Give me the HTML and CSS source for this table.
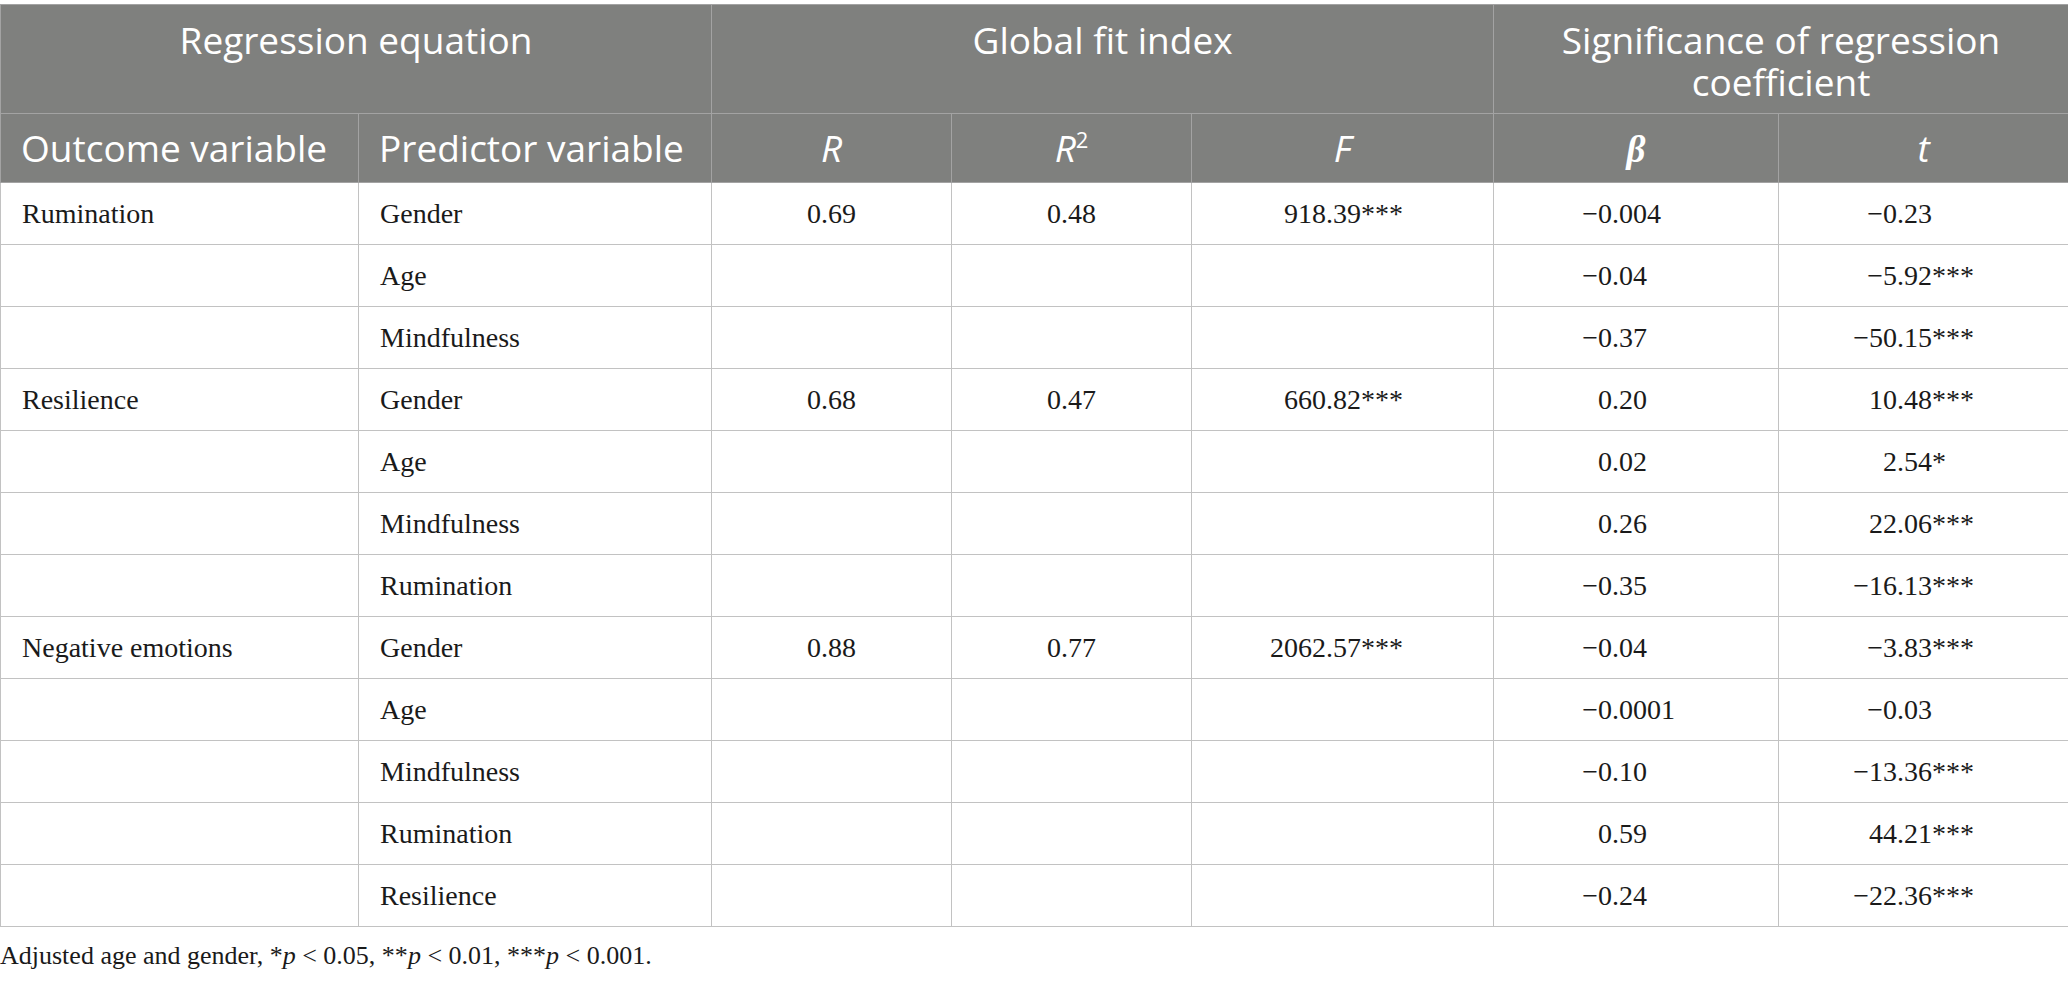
FILE: index.html
```html
<!DOCTYPE html>
<html lang="en">
<head>
<meta charset="utf-8">
<title>Regression table</title>
<link rel="stylesheet" href="styles.css">
</head>
<body>
<table class="tbl">
  <colgroup>
    <col class="c1"><col class="c2"><col class="c3"><col class="c4"><col class="c5"><col class="c6"><col class="c7">
  </colgroup>
  <thead>
    <tr class="h1">
      <th colspan="2">Regression equation</th>
      <th colspan="3">Global fit index</th>
      <th colspan="2">Significance of regression<br>coefficient</th>
    </tr>
    <tr class="h2">
      <th class="left">Outcome variable</th>
      <th class="left">Predictor variable</th>
      <th><i>R</i></th>
      <th><i>R</i><sup>2</sup></th>
      <th><i>F</i></th>
      <th><i class="beta">β</i></th>
      <th><i>t</i></th>
    </tr>
  </thead>
  <tbody>
    <tr>
      <td class="txt">Rumination</td><td class="txt">Gender</td>
      <td class="ctr">0.69</td><td class="ctr">0.48</td>
      <td class="dec df"><span class="ip">918</span>.39***</td>
      <td class="dec db"><span class="ip">−0</span>.004</td>
      <td class="dec dt"><span class="ip">−0</span>.23</td>
    </tr>
    <tr>
      <td class="txt"></td><td class="txt">Age</td>
      <td></td><td></td><td></td>
      <td class="dec db"><span class="ip">−0</span>.04</td>
      <td class="dec dt"><span class="ip">−5</span>.92***</td>
    </tr>
    <tr>
      <td class="txt"></td><td class="txt">Mindfulness</td>
      <td></td><td></td><td></td>
      <td class="dec db"><span class="ip">−0</span>.37</td>
      <td class="dec dt"><span class="ip">−50</span>.15***</td>
    </tr>
    <tr>
      <td class="txt">Resilience</td><td class="txt">Gender</td>
      <td class="ctr">0.68</td><td class="ctr">0.47</td>
      <td class="dec df"><span class="ip">660</span>.82***</td>
      <td class="dec db"><span class="ip">0</span>.20</td>
      <td class="dec dt"><span class="ip">10</span>.48***</td>
    </tr>
    <tr>
      <td class="txt"></td><td class="txt">Age</td>
      <td></td><td></td><td></td>
      <td class="dec db"><span class="ip">0</span>.02</td>
      <td class="dec dt"><span class="ip">2</span>.54*</td>
    </tr>
    <tr>
      <td class="txt"></td><td class="txt">Mindfulness</td>
      <td></td><td></td><td></td>
      <td class="dec db"><span class="ip">0</span>.26</td>
      <td class="dec dt"><span class="ip">22</span>.06***</td>
    </tr>
    <tr>
      <td class="txt"></td><td class="txt">Rumination</td>
      <td></td><td></td><td></td>
      <td class="dec db"><span class="ip">−0</span>.35</td>
      <td class="dec dt"><span class="ip">−16</span>.13***</td>
    </tr>
    <tr>
      <td class="txt">Negative emotions</td><td class="txt">Gender</td>
      <td class="ctr">0.88</td><td class="ctr">0.77</td>
      <td class="dec df"><span class="ip">2062</span>.57***</td>
      <td class="dec db"><span class="ip">−0</span>.04</td>
      <td class="dec dt"><span class="ip">−3</span>.83***</td>
    </tr>
    <tr>
      <td class="txt"></td><td class="txt">Age</td>
      <td></td><td></td><td></td>
      <td class="dec db"><span class="ip">−0</span>.0001</td>
      <td class="dec dt"><span class="ip">−0</span>.03</td>
    </tr>
    <tr>
      <td class="txt"></td><td class="txt">Mindfulness</td>
      <td></td><td></td><td></td>
      <td class="dec db"><span class="ip">−0</span>.10</td>
      <td class="dec dt"><span class="ip">−13</span>.36***</td>
    </tr>
    <tr>
      <td class="txt"></td><td class="txt">Rumination</td>
      <td></td><td></td><td></td>
      <td class="dec db"><span class="ip">0</span>.59</td>
      <td class="dec dt"><span class="ip">44</span>.21***</td>
    </tr>
    <tr>
      <td class="txt"></td><td class="txt">Resilience</td>
      <td></td><td></td><td></td>
      <td class="dec db"><span class="ip">−0</span>.24</td>
      <td class="dec dt"><span class="ip">−22</span>.36***</td>
    </tr>
  </tbody>
</table>
<p class="note">Adjusted age and gender, *<i>p</i> &lt; 0.05, **<i>p</i> &lt; 0.01, ***<i>p</i> &lt; 0.001.</p>
</body>
</html>
```

FILE: styles.css
```css
html, body {
  margin: 0;
  padding: 0;
  background: #ffffff;
}

body {
  padding-top: 4px;
  font-family: "Liberation Serif", "Times New Roman", serif;
  color: #1a1a1a;
}

.tbl {
  width: 2068px;
  border-collapse: collapse;
  table-layout: fixed;
  border: 1px solid #bdbdbd;
}

.c1 { width: 358px; }
.c2 { width: 353px; }
.c3 { width: 240px; }
.c4 { width: 240px; }
.c5 { width: 302px; }
.c6 { width: 285px; }
.c7 { width: 290px; }

.tbl th {
  background: #7f807e;
  color: #ffffff;
  font-family: "Open Sans", "Noto Sans", sans-serif;
  font-weight: 400;
  font-size: 37px;
  line-height: 42px;
  border: 1px solid #a3a3a3;
  text-align: center;
}

.tbl tr.h1 th {
  vertical-align: top;
  padding: 14px 10px 10px;
  height: 84px;
}

.tbl tr.h2 th {
  padding: 13px 10px 13px;
  height: 42px;
  vertical-align: middle;
}

.tbl tr.h2 th.left {
  text-align: left;
  padding-left: 20px;
}

.tbl th i {
  line-height: 0;
}

.tbl th sup {
  font-size: 22px;
  line-height: 0;
  vertical-align: 14px;
}

.tbl th .beta {
  font-family: "Liberation Serif", "DejaVu Serif", serif;
  font-weight: 700;
}

.tbl td {
  font-size: 28px;
  line-height: 34px;
  height: 34px;
  padding: 14px 0 13px;
  border: 1px solid #c2c2c2;
  vertical-align: middle;
  white-space: nowrap;
}

.tbl td.txt {
  padding-left: 21px;
  text-align: left;
}

.tbl td.ctr {
  text-align: center;
}

.tbl td.dec {
  text-align: left;
}

.ip {
  display: inline-block;
  width: 60px;
  text-align: right;
}

.tbl td.df { padding-left: 74px; }
.tbl td.db { padding-left: 58px; }
.tbl td.dt { padding-left: 58px; }

.note {
  margin: 14px 0 0;
  font-size: 26px;
  line-height: 30px;
  color: #1a1a1a;
}
```
